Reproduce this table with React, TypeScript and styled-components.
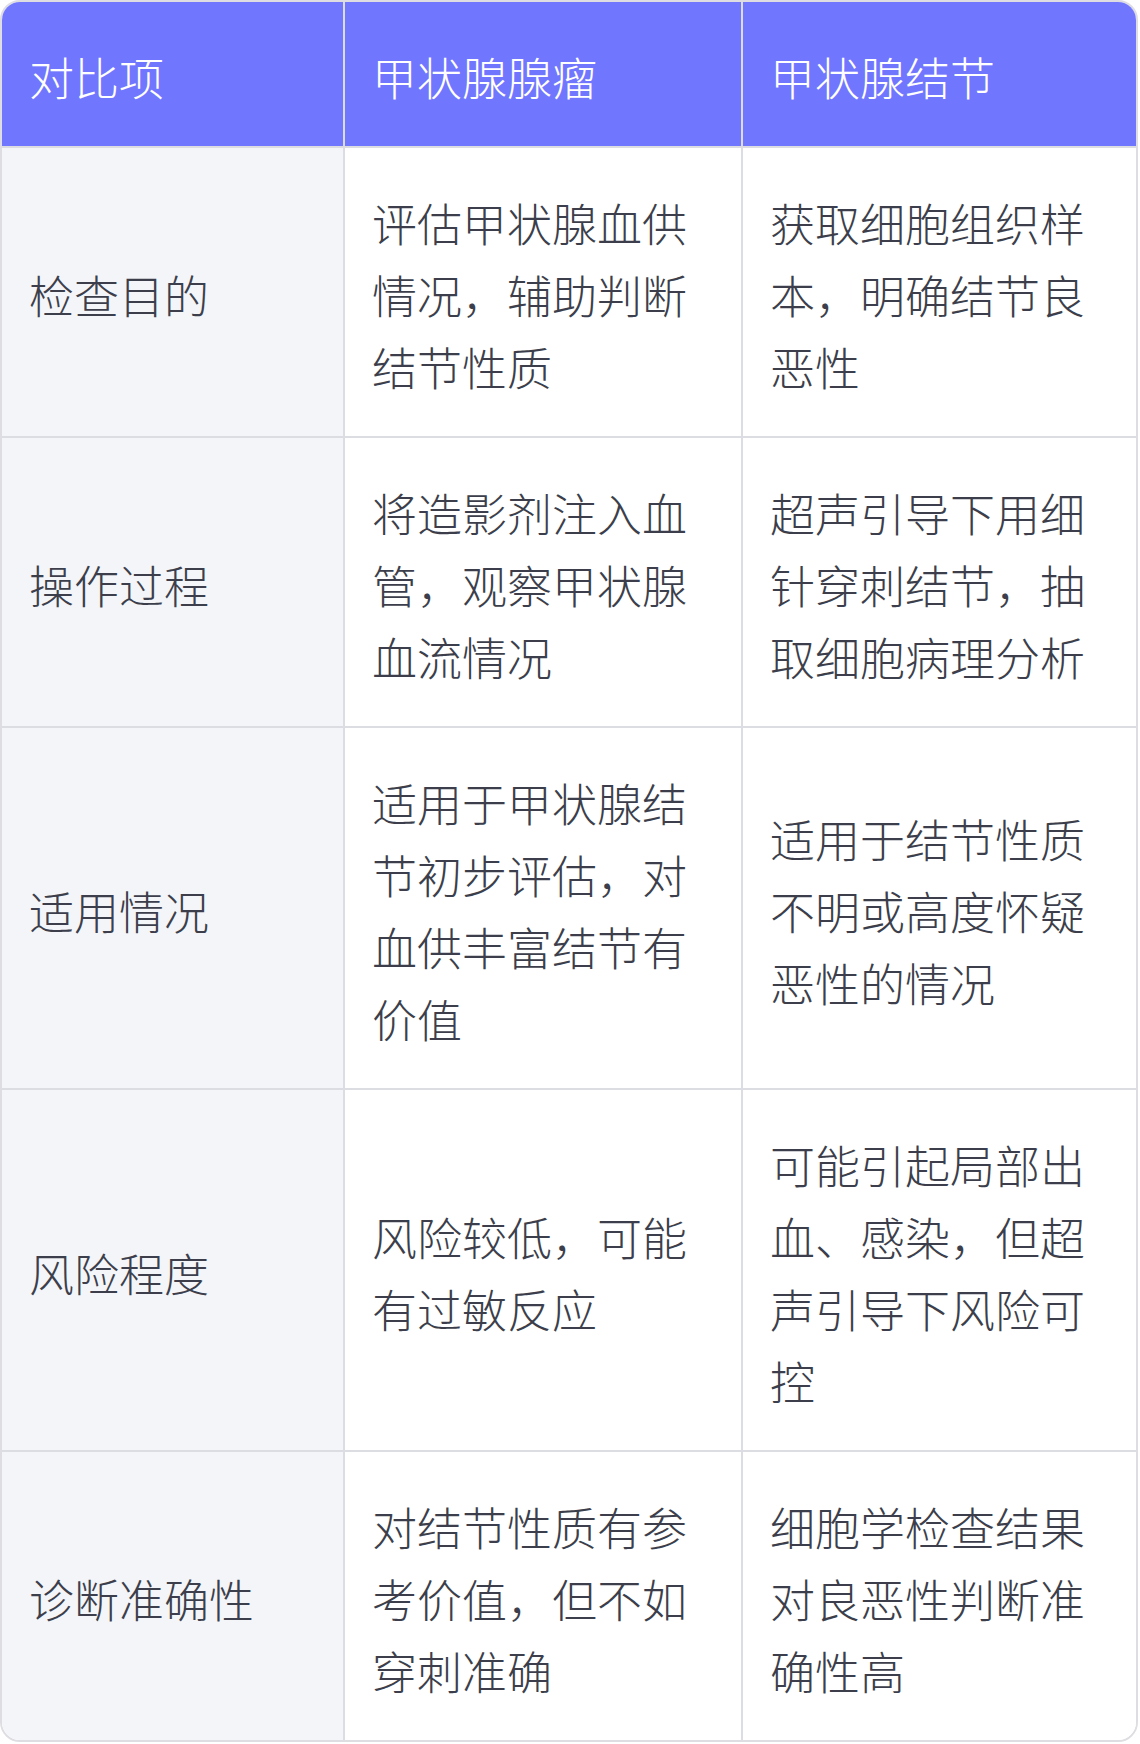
import React from "react";
import styled, { createGlobalStyle } from "styled-components";

type Row = {
  label: string;
  adenoma: string;
  nodule: string;
};

const HEADERS = ["对比项", "甲状腺腺瘤", "甲状腺结节"];

const ROWS: Row[] = [
  {
    label: "检查目的",
    adenoma: "评估甲状腺血供情况，辅助判断结节性质",
    nodule: "获取细胞组织样本，明确结节良恶性",
  },
  {
    label: "操作过程",
    adenoma: "将造影剂注入血管，观察甲状腺血流情况",
    nodule: "超声引导下用细针穿刺结节，抽取细胞病理分析",
  },
  {
    label: "适用情况",
    adenoma: "适用于甲状腺结节初步评估，对血供丰富结节有价值",
    nodule: "适用于结节性质不明或高度怀疑恶性的情况",
  },
  {
    label: "风险程度",
    adenoma: "风险较低，可能有过敏反应",
    nodule: "可能引起局部出血、感染，但超声引导下风险可控",
  },
  {
    label: "诊断准确性",
    adenoma: "对结节性质有参考价值，但不如穿刺准确",
    nodule: "细胞学检查结果对良恶性判断准确性高",
  },
];

const App: React.FC = () => {
  return (
    <>
      <GlobalStyle />
      <Table>
        {HEADERS.map((h, i) => (
          <HeadCell key={h} isLast={i === HEADERS.length - 1}>
            {h}
          </HeadCell>
        ))}
        {ROWS.map((row, r) => {
          const isLastRow = r === ROWS.length - 1;
          return (
            <React.Fragment key={row.label}>
              <LabelCell isLastRow={isLastRow}>{row.label}</LabelCell>
              <Cell isLastRow={isLastRow}>{row.adenoma}</Cell>
              <Cell isLastRow={isLastRow} isLast>
                {row.nodule}
              </Cell>
            </React.Fragment>
          );
        })}
      </Table>
    </>
  );
};

export default App;

const GlobalStyle = createGlobalStyle`
  html, body {
    margin: 0;
    padding: 0;
    background: #ffffff;
  }

  body {
    font-family: "Noto Sans CJK SC", "Noto Sans", sans-serif;
  }
`;

const Table = styled.div`
  box-sizing: border-box;
  width: 1138px;
  display: grid;
  grid-template-columns: 343px 398px 1fr;
  border: 2px solid #dedee2;
  border-radius: 20px;
  overflow: hidden;
  font-size: 45px;
  font-weight: 300;
  line-height: 72px;
`;

const BaseCell = styled.div<{ isLast?: boolean; isLastRow?: boolean }>`
  box-sizing: border-box;
  display: flex;
  align-items: center;
  padding: 39px 27px 33px;
  border-right: ${({ isLast }) => (isLast ? "none" : "2px solid #dcdde2")};
  border-bottom: ${({ isLastRow }) =>
    isLastRow ? "none" : "2px solid #dcdde2"};
  word-break: break-all;
`;

const HeadCell = styled(BaseCell)`
  background: #7176ff;
  color: #ffffff;
`;

const LabelCell = styled(BaseCell)`
  background: #f4f5f9;
  color: #3c3f4b;
`;

const Cell = styled(BaseCell)`
  background: #ffffff;
  color: #3c3f4b;
`;
